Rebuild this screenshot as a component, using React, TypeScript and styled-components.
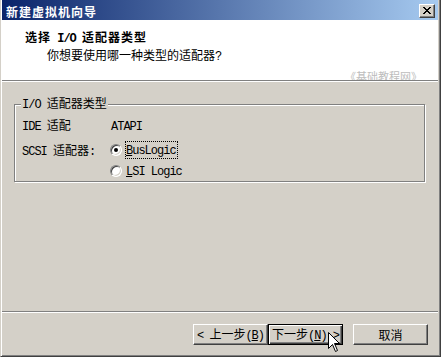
import React from "react";
import styled, { createGlobalStyle, css } from "styled-components";

const GlobalStyle = createGlobalStyle`
  html, body { margin: 0; padding: 0; background: #D4D0C8; }
  body {
    font-family: "Noto Sans CJK SC", "Noto Sans", sans-serif;
    font-size: 12px;
    color: #000;
  }
  * { box-sizing: border-box; }
`;

const Window = styled.div`
  position: relative;
  width: 441px;
  height: 357px;
  display: flex;
  flex-direction: column;
  background: #d4d0c8;
  border-left: 1px solid #d4d0c8;
  border-right: 1px solid #404040;
  border-bottom: 1px solid #404040;
  box-shadow: inset 1px 0 0 #fff, inset -1px -1px 0 #808080;
  padding: 0 2px 1px 1px;
`;

const Lat = styled.span`
  font-family: "Liberation Mono", monospace;
  letter-spacing: -1px;
`;

const Key = styled.span`
  text-decoration: underline;
`;

const TitleBar = styled.div`
  flex: none;
  height: 20px;
  display: flex;
  align-items: center;
  justify-content: space-between;
  padding: 0 3px 0 4px;
  background: linear-gradient(to right, #0a246a, #a6caf0);
`;

const TitleText = styled.span`
  color: #fff;
  font-weight: bold;
  letter-spacing: 1px;
  line-height: 14px;
  margin-top: 3px;
`;

const CloseButton = styled.button`
  width: 16px;
  height: 14px;
  margin: 1px 0 0 0;
  padding: 0;
  display: flex;
  align-items: center;
  justify-content: center;
  background: #d4d0c8;
  border: 1px solid;
  border-color: #fff #404040 #404040 #fff;
  box-shadow: inset -1px -1px 0 #808080;
`;

const Header = styled.div`
  flex: none;
  height: 60px;
  background: #fff;
  display: flex;
  flex-direction: column;
  padding-top: 10px;
`;

const HeaderTitle = styled.div`
  font-weight: bold;
  line-height: 14px;
  padding-left: 23px;
  letter-spacing: 1px;
`;

const HeaderSubtitle = styled.div`
  line-height: 14px;
  padding-left: 45px;
  margin-top: 2px;
`;

const Watermark = styled.div`
  align-self: flex-end;
  margin: 6px 16px 0 0;
  font-size: 11px;
  line-height: 12px;
  color: #bdbdbd;
`;

const Separator = styled.div`
  flex: none;
  height: 2px;
  border-top: 1px solid #808080;
  border-bottom: 1px solid #fff;
`;

const Body = styled.div`
  flex: 1;
  display: flex;
  flex-direction: column;
`;

const GroupBox = styled.fieldset`
  margin: 14px 13px 0 12px;
  padding: 5px 8px 2px 7px;
  min-width: 0;
  border: 1px solid #808080;
  box-shadow: 1px 1px 0 #fff, inset 1px 1px 0 #fff;
`;

const Legend = styled.legend`
  position: relative;
  padding: 0 1px;
  margin-left: -1px;
  line-height: 14px;
  background: #d4d0c8;
`;

const FormGrid = styled.div`
  display: grid;
  grid-template-columns: 88px auto;
  row-gap: 9px;
  align-items: start;
  line-height: 16px;
`;

const Label = styled.div`
  height: 16px;
`;

const Value = styled.div`
  height: 16px;
  padding-left: 1px;
`;

const RadioGroup = styled.div`
  display: flex;
  flex-direction: column;
  gap: 5px;
`;

const RadioOption = styled.label`
  display: flex;
  align-items: center;
  height: 16px;
  gap: 3px;
`;

const RadioCircle = styled.span<{ $checked?: boolean }>`
  position: relative;
  width: 12px;
  height: 12px;
  border-radius: 50%;
  background: #fff;
  border: 1px solid;
  border-color: #808080 #fff #fff #808080;
  box-shadow: inset 1px 1px 0 #404040, inset -1px -1px 0 #d4d0c8;
  ${(p) =>
    p.$checked &&
    css`
      &::after {
        content: "";
        position: absolute;
        left: 3px;
        top: 3px;
        width: 4px;
        height: 4px;
        border-radius: 50%;
        background: #000;
      }
    `}
`;

const RadioText = styled.span<{ $focused?: boolean }>`
  line-height: 14px;
  padding: 0 1px 0 0;
  border: 1px dotted ${(p) => (p.$focused ? "#000" : "transparent")};
`;

const Footer = styled.div`
  flex: none;
  height: 42px;
  display: flex;
  justify-content: flex-end;
  align-items: flex-start;
  gap: 10px;
  padding: 11px 10px 0 0;
`;

const NavGroup = styled.div`
  display: flex;
`;

const Button = styled.button<{ $default?: boolean }>`
  width: 75px;
  height: 21px;
  margin: 0;
  padding: 0;
  font: inherit;
  line-height: 14px;
  color: #000;
  display: flex;
  align-items: center;
  justify-content: center;
  background: #d4d0c8;
  border: 1px solid;
  border-color: #fff #404040 #404040 #fff;
  box-shadow: inset -1px -1px 0 #808080;
  ${(p) =>
    p.$default &&
    css`
      border: 1px solid #000;
      box-shadow: inset 1px 1px 0 #fff, inset -1px -1px 0 #404040,
        inset -2px -2px 0 #808080;
    `}
`;

const ButtonLabel = styled.span`
  white-space: pre;
`;

const Cursor = styled.svg`
  position: absolute;
  left: 327px;
  top: 332px;
  pointer-events: none;
`;

export default function App() {
  return (
    <>
      <GlobalStyle />
      <Window>
        <TitleBar>
          <TitleText>新建虚拟机向导</TitleText>
          <CloseButton aria-label="关闭">
            <svg width="8" height="7" viewBox="0 0 8 7" shapeRendering="crispEdges">
              <path
                fill="#000"
                d="M0 0h2v1H0z M6 0h2v1H6z M1 1h2v1H1z M5 1h2v1H5z M2 2h4v1H2z M3 3h2v1H3z M2 4h4v1H2z M1 5h2v1H1z M5 5h2v1H5z M0 6h2v1H0z M6 6h2v1H6z"
              />
            </svg>
          </CloseButton>
        </TitleBar>
        <Header>
          <HeaderTitle>
            选择<Lat> I/O </Lat>适配器类型
          </HeaderTitle>
          <HeaderSubtitle>
            你想要使用哪一种类型的适配器<Lat>?</Lat>
          </HeaderSubtitle>
          <Watermark>《基础教程网》</Watermark>
        </Header>
        <Separator />
        <Body>
          <GroupBox>
            <Legend>
              <Lat>I/O </Lat>适配器类型
            </Legend>
            <FormGrid>
              <Label>
                <Lat>IDE </Lat>适配
              </Label>
              <Value>
                <Lat>ATAPI</Lat>
              </Value>
              <Label>
                <Lat>SCSI </Lat>适配器<Lat>:</Lat>
              </Label>
              <RadioGroup>
                <RadioOption>
                  <RadioCircle $checked />
                  <RadioText $focused>
                    <Lat>
                      <Key>B</Key>usLogic
                    </Lat>
                  </RadioText>
                </RadioOption>
                <RadioOption>
                  <RadioCircle />
                  <RadioText>
                    <Lat>
                      <Key>L</Key>SI Logic
                    </Lat>
                  </RadioText>
                </RadioOption>
              </RadioGroup>
            </FormGrid>
          </GroupBox>
        </Body>
        <Separator />
        <Footer>
          <NavGroup>
            <Button>
              <ButtonLabel>
                <Lat>{"< "}</Lat>上一步<Lat>(<Key>B</Key>)</Lat>
              </ButtonLabel>
            </Button>
            <Button $default>
              <ButtonLabel>
                下一步<Lat>(<Key>N</Key>){" >"}</Lat>
              </ButtonLabel>
            </Button>
          </NavGroup>
          <Button>
            <ButtonLabel>取消</ButtonLabel>
          </Button>
        </Footer>
        <Cursor width="13" height="21" viewBox="0 0 13 21">
          <path
            d="M0.5 0.5 L0.5 16.5 L4.5 12.5 L7.5 19.5 L9.5 18.5 L6.5 11.5 L11.5 11.5 Z"
            fill="#fff"
            stroke="#000"
            strokeWidth="1"
            strokeLinejoin="miter"
          />
        </Cursor>
      </Window>
    </>
  );
}
